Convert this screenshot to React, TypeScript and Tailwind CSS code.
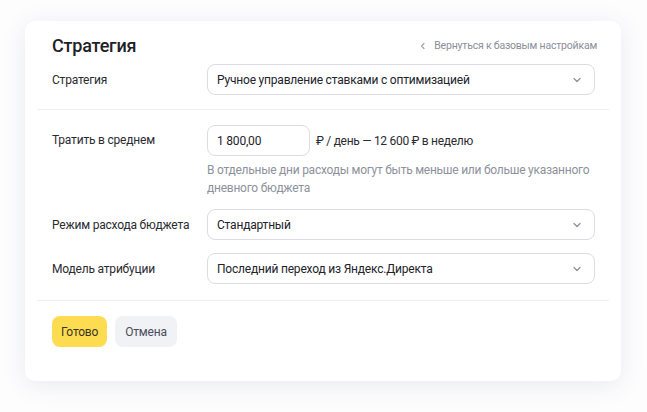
import React from "react";

const Chevron = () => (
  <svg width="10" height="10" viewBox="0 0 10 10" className="shrink-0">
    <path d="M2 3.5 L5 6.5 L8 3.5" fill="none" stroke="#8a8f99" strokeWidth="1.2" strokeLinecap="round" strokeLinejoin="round" />
  </svg>
);

const Select = ({ value }: { value: string }) => (
  <div className="flex h-[31px] flex-1 items-center justify-between rounded-[8px] border border-[#dcdde3] bg-white pl-[9px] pr-[12px] text-[12px] tracking-[-0.2px] text-[#22232a]">
    <span>{value}</span>
    <Chevron />
  </div>
);

export default function App() {
  return (
    <div className="min-h-[412px] w-[647px] bg-[#fdfdfe] pl-[25px] pt-[21px]" style={{ fontFamily: "Roboto, 'Noto Sans', sans-serif" }}>
      <div className="w-[596px] rounded-[10px] bg-white pb-[34px] shadow-[0_4px_24px_rgba(60,70,110,0.10)]">
        <div className="flex items-center justify-between pl-[27px] pr-[24px] pt-[11px]">
          <span className="text-[18px] font-medium tracking-[-0.2px] text-[#1f2026]">Стратегия</span>
          <span className="flex items-center gap-[7px] text-[10.5px] tracking-[-0.2px] text-[#8a8e98]">
            <svg width="8" height="8" viewBox="0 0 8 8"><path d="M5 1.5 L2.5 4 L5 6.5" fill="none" stroke="#9a9ea8" strokeWidth="1.1" strokeLinecap="round" strokeLinejoin="round" /></svg>
            Вернуться к базовым настройкам
          </span>
        </div>
        <div className="mt-[5px] flex items-center pl-[27px] pr-[26px]">
          <span className="w-[155px] text-[12px] tracking-[-0.2px] text-[#2a2b31]">Стратегия</span>
          <Select value="Ручное управление ставками с оптимизацией" />
        </div>
        <div className="mx-[12px] mt-[14px] h-px bg-[#eeeff2]" />
        <div className="mt-[15px] flex pl-[27px] pr-[26px]">
          <span className="w-[155px] pt-[6px] text-[12px] tracking-[-0.2px] text-[#2a2b31]">Тратить в среднем</span>
          <div className="flex-1">
            <div className="flex items-center">
              <div className="flex h-[31px] w-[103px] items-center rounded-[8px] border border-[#dcdde3] pl-[9px] text-[12px] tracking-[-0.2px] text-[#22232a]">1 800,00</div>
              <span className="ml-[6px] text-[12px] tracking-[-0.3px] text-[#2a2b31]">₽ / день — 12 600 ₽ в неделю</span>
            </div>
            <p className="mt-[5px] whitespace-nowrap text-[12px] leading-[18px] tracking-[-0.25px] text-[#8d919b]">
              В отдельные дни расходы могут быть меньше или больше указанного<br />дневного бюджета
            </p>
          </div>
        </div>
        <div className="mt-[12px] flex items-center pl-[27px] pr-[26px]">
          <span className="w-[155px] text-[12px] tracking-[-0.2px] text-[#2a2b31]">Режим расхода бюджета</span>
          <Select value="Стандартный" />
        </div>
        <div className="mt-[13px] flex items-center pl-[27px] pr-[26px]">
          <span className="w-[155px] text-[12px] tracking-[-0.2px] text-[#2a2b31]">Модель атрибуции</span>
          <Select value="Последний переход из Яндекс.Директа" />
        </div>
        <div className="mx-[12px] mt-[16px] h-px bg-[#eeeff2]" />
        <div className="mt-[15px] flex gap-[8px] pl-[27px]">
          <button className="h-[31px] rounded-[8px] bg-[#fedc52] px-[9px] text-[12px] tracking-[-0.2px] text-[#3a3520]">Готово</button>
          <button className="h-[31px] rounded-[8px] bg-[#f1f2f6] px-[10px] text-[12px] tracking-[-0.2px] text-[#4a4d56]">Отмена</button>
        </div>
      </div>
    </div>
  );
}
